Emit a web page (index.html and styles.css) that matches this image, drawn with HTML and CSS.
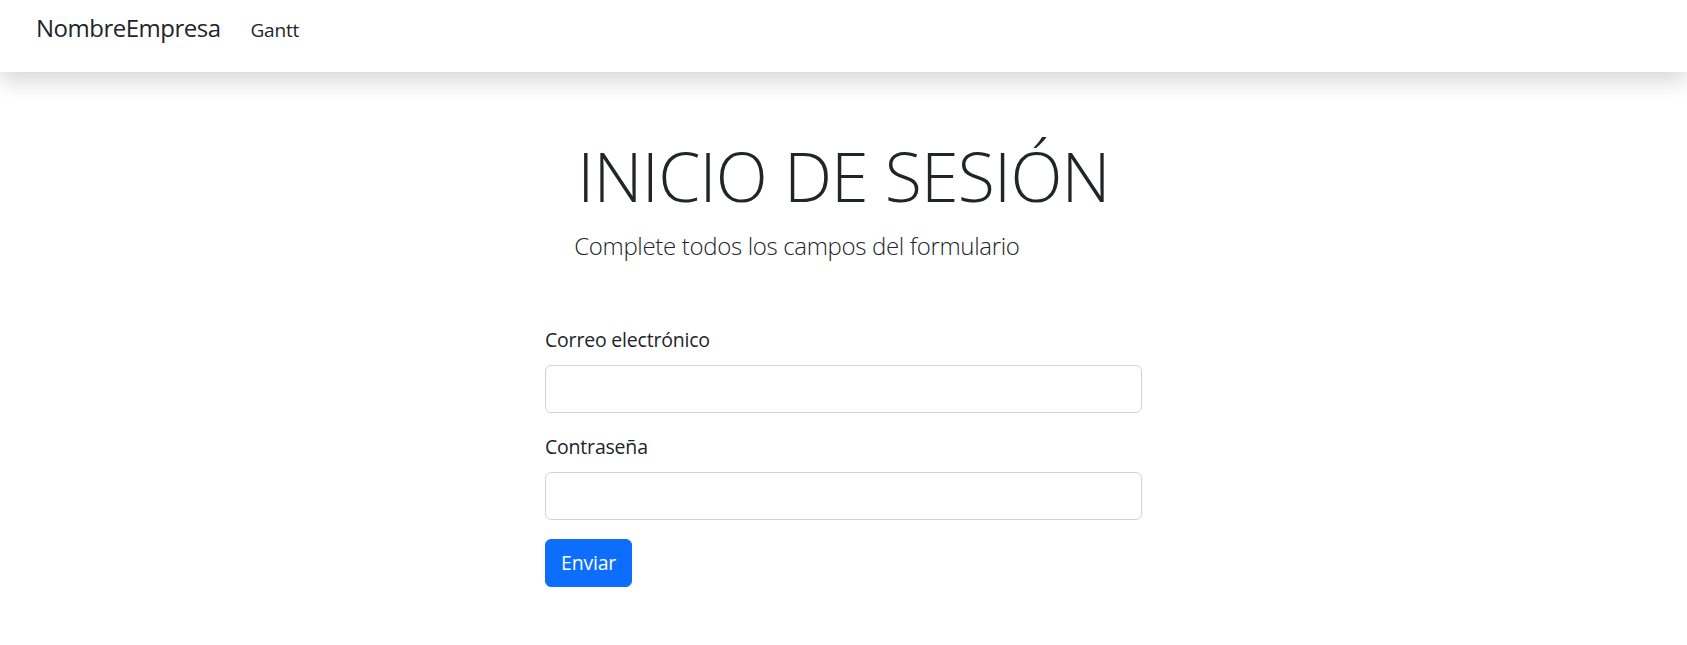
FILE: index.html
```html
<!DOCTYPE html>
<html lang="es">
<head>
<meta charset="utf-8">
<title>Inicio de sesión</title>
<link rel="stylesheet" href="styles.css">
</head>
<body>
<header class="navbar">
  <a class="brand" href="#">NombreEmpresa</a>
  <a class="nav-link" href="#">Gantt</a>
</header>
<main class="main">
  <div class="heading">
    <div class="heading-inner">
      <h1 class="title">INICIO DE SESIÓN</h1>
      <p class="lead">Complete todos los campos del formulario</p>
    </div>
  </div>
  <form class="login-form">
    <div class="field">
      <label class="label" for="email">Correo electrónico</label>
      <input class="input" id="email" type="email">
    </div>
    <div class="field">
      <label class="label" for="pass">Contraseña</label>
      <input class="input" id="pass" type="password">
    </div>
    <button class="btn" type="button">Enviar</button>
  </form>
</main>
</body>
</html>
```
FILE: styles.css
```css
* { box-sizing: border-box; }
html, body { margin: 0; padding: 0; background: #fff; }
body {
  font-family: "Segoe UI", "Open Sans", "Noto Sans", sans-serif;
  color: #212529;
}
.navbar {
  height: 72px;
  display: flex;
  align-items: baseline;
  padding: 9px 36px 0;
  background: #fff;
  box-shadow: 0 10px 20px rgba(0, 0, 0, 0.15);
  position: relative;
  z-index: 1;
}
.brand {
  font-size: 24px;
  line-height: 37.5px;
  letter-spacing: -0.5px;
  color: #212529;
  text-decoration: none;
  margin-right: 30px;
}
.nav-link {
  font-size: 19px;
  line-height: 30px;
  letter-spacing: -0.2px;
  color: #212529;
  text-decoration: none;
}
.main {
  padding-top: 62px;
}
.heading {
  display: flex;
  justify-content: center;
}
.heading-inner {
  display: flex;
  flex-direction: column;
  align-items: flex-start;
}
.title {
  margin: 0;
  font-size: 68px;
  line-height: 84px;
  font-weight: 300;
  letter-spacing: -0.8px;
}
.lead {
  margin: 9px 0 0 -3px;
  font-size: 24px;
  line-height: 37.5px;
  font-weight: 300;
  letter-spacing: -0.33px;
}
.login-form {
  width: 597px;
  margin: 60px auto 0;
  display: flex;
  flex-direction: column;
  align-items: flex-start;
}
.field {
  width: 100%;
  margin-bottom: 19px;
  display: flex;
  flex-direction: column;
}
.label {
  font-size: 19.5px;
  line-height: 30px;
  letter-spacing: -0.2px;
  margin-bottom: 10px;
}
.input {
  height: 48px;
  width: 100%;
  border: 1px solid #ced4da;
  border-radius: 6px;
  background: #fff;
  font: inherit;
  font-size: 20px;
  padding: 0 15px;
}
.btn {
  height: 48px;
  padding: 0 15px;
  border: 1px solid #0d6efd;
  background: #0d6efd;
  color: #fff;
  border-radius: 6px;
  font: inherit;
  font-size: 19.5px;
  line-height: 30px;
  letter-spacing: -0.2px;
}
```
